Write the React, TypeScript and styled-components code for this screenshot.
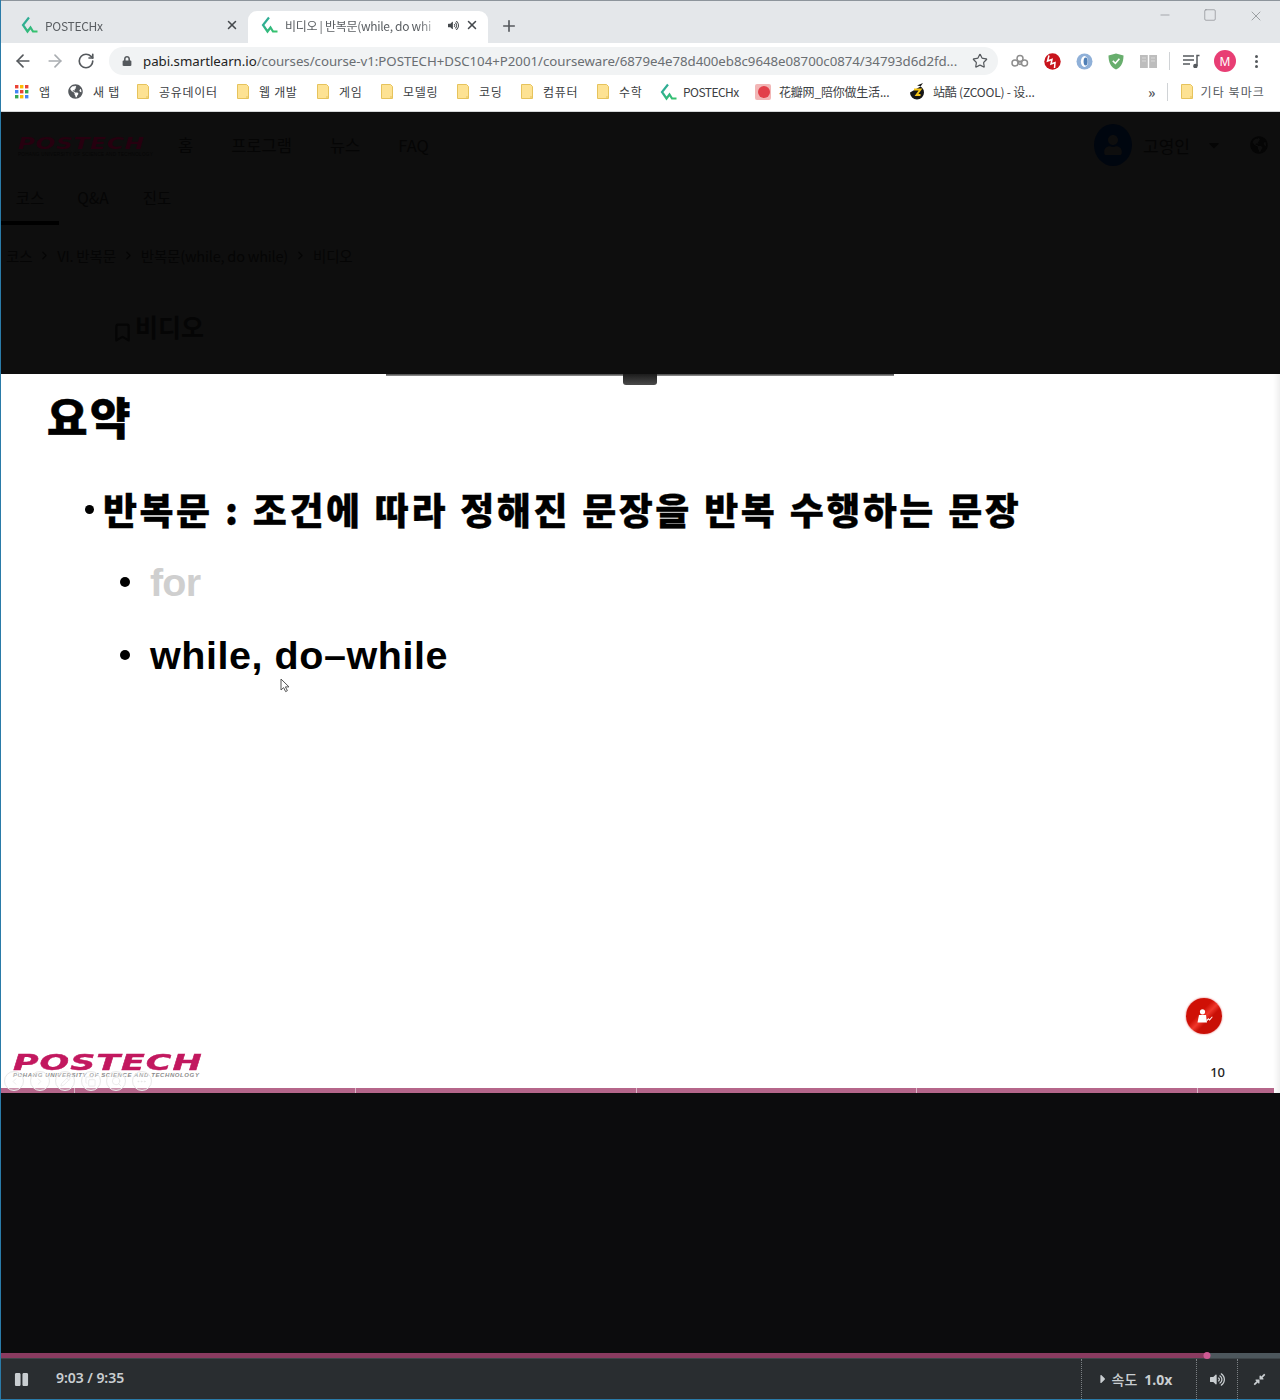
import * as React from "react";
import styled, { createGlobalStyle } from "styled-components";
import { ArrowLeft, ArrowRight, RotateCw, Star, X, Plus, Minus, Square, Bookmark, ChevronRight, ChevronLeft, Pencil, Copy, Search, MoreHorizontal } from "lucide-react";
import { FaLock, FaGlobeAmericas, FaVolumeUp, FaCompressAlt, FaPause, FaCaretRight, FaCaretDown, FaUser } from "react-icons/fa";

const KR = `"Noto Sans CJK KR", "Noto Sans", sans-serif`;

const GlobalStyle = createGlobalStyle`
  html, body { margin: 0; padding: 0; background: #fff; overflow: hidden; }
  * { box-sizing: border-box; }
`;

const Win = styled.div`
  width: 1280px;
  height: 1400px;
  display: flex;
  flex-direction: column;
  border-left: 1px solid #2a7ba8;
  font-family: ${KR};
  overflow: hidden;
`;

const TabStrip = styled.div`
  height: 43px;
  flex: none;
  background: #e4e7ea;
  border-top: 1px solid #8d959c;
  display: flex;
  align-items: flex-end;
  padding-left: 7px;
  color: #45494d;
`;

const Tab = styled.div<{ $active?: boolean }>`
  width: 240px;
  height: 32px;
  display: flex;
  align-items: center;
  padding: 0 9px 4px 13px;
  border-radius: 9px 9px 0 0;
  background: ${(p) => (p.$active ? "#fff" : "transparent")};
  font-size: 12px;
  gap: 6px;
`;

const TabTitle = styled.span`
  flex: 1;
  white-space: nowrap;
  overflow: hidden;
  color: #5a5e62;
  letter-spacing: -0.3px;
  mask-image: linear-gradient(to right, #000 85%, transparent 100%);
`;

const NewTab = styled.div`
  margin-left: 12px;
  height: 32px;
  display: flex;
  align-items: center;
  padding-bottom: 2px;
  color: #55595d;
`;

const WinButtons = styled.div`
  margin-left: auto;
  align-self: flex-start;
  display: flex;
  gap: 31px;
  padding: 7px 16px 0 0;
  color: #777b7f;
`;

const Toolbar = styled.div`
  height: 34px;
  flex: none;
  background: #fff;
  display: flex;
  align-items: center;
  padding: 2px 0 0 12px;
  color: #5f6368;
`;

const NavBtn = styled.div<{ $dim?: boolean }>`
  width: 32px;
  display: flex;
  color: ${(p) => (p.$dim ? "#a9adb1" : "#55595d")};
`;

const Omnibox = styled.div`
  width: 889px;
  height: 28px;
  border-radius: 14px;
  background: #f1f3f4;
  display: flex;
  align-items: center;
  padding: 0 10px 0 13px;
  font-size: 13.28px;
  letter-spacing: -0.03px;
  color: #6a6e72;
  white-space: nowrap;
  font-family: "Noto Sans", sans-serif;
`;

const Host = styled.span`
  color: #222;
`;

const Url = styled.span`
  margin-left: 11px;
  flex: 1;
  overflow: hidden;
`;

const Extensions = styled.div`
  display: flex;
  align-items: center;
  padding-left: 6px;
`;

const Ext = styled.div`
  width: 32px;
  height: 24px;
  display: flex;
  align-items: center;
  justify-content: center;
`;

const VDivider = styled.div`
  width: 1px;
  height: 18px;
  background: #d0d3d6;
  margin: 0 5px 0 5px;
`;

const Avatar = styled.div`
  width: 22px;
  height: 22px;
  border-radius: 50%;
  background: #e83e74;
  color: #fff;
  font-size: 12px;
  display: flex;
  align-items: center;
  justify-content: center;
  font-family: "Noto Sans", sans-serif;
  margin: 0 10px 0 7px;
`;

const Kebab = styled.div`
  display: flex;
  flex-direction: column;
  gap: 2px;
  margin-left: 9px;
  i {
    width: 3px;
    height: 3px;
    border-radius: 50%;
    background: #55595d;
  }
`;

const Bookmarks = styled.div`
  height: 35px;
  flex: none;
  background: #fff;
  border-bottom: 1px solid #d4d6d8;
  display: flex;
  align-items: center;
  padding: 0 15px 5px 14px;
  font-size: 12px;
  color: #3c4043;
`;

const Mark = styled.div<{ $w: number; $gap: number }>`
  width: ${(p) => p.$w}px;
  flex: none;
  display: flex;
  align-items: center;
  gap: ${(p) => p.$gap}px;
  white-space: nowrap;
  overflow: hidden;
`;

const MarkLabel = styled.span<{ $ls: number }>`
  letter-spacing: ${(p) => p.$ls}px;
`;

const MarksRight = styled.div`
  margin-left: auto;
  display: flex;
  align-items: center;
  color: #55595d;
  gap: 8px;
`;

const Chevrons = styled.span`
  font-size: 14px;
  font-weight: 700;
  margin-right: -2px;
`;

const DimPage = styled.div`
  height: 262px;
  flex: none;
  background: #0e0e0e;
  color: #050505;
  display: flex;
  flex-direction: column;
`;

const DimHeader = styled.div`
  height: 66px;
  display: flex;
  align-items: center;
  padding: 0 12px 0 17px;
  font-size: 16.5px;
`;

const DimLogo = styled.div`
  width: 160px;
  display: flex;
  flex-direction: column;
  padding-top: 6px;
`;

const DimLogoWord = styled.div`
  color: #26000f;
  font: italic 700 16.5px/14px "DejaVu Sans", sans-serif;
  white-space: nowrap;
  transform: scaleX(1.4);
  transform-origin: left center;
  letter-spacing: 0.6px;
`;

const DimLogoSub = styled.div`
  font: 500 4.6px/8px "Liberation Sans", sans-serif;
  letter-spacing: 0.3px;
  white-space: nowrap;
  color: #060606;
`;

const DimNav = styled.div`
  display: flex;
  gap: 38px;
`;

const DimUser = styled.div`
  margin-left: auto;
  display: flex;
  align-items: center;
  gap: 11px;
  font-size: 17px;
`;

const DimAvatar = styled.div`
  width: 38px;
  height: 42px;
  border-radius: 50%;
  background: #00060f;
  color: #0e0e0e;
  display: flex;
  align-items: center;
  justify-content: center;
  font-size: 20px;
`;

const DimGlobe = styled.div`
  color: #050505;
  margin-left: 17px;
  display: flex;
`;

const DimCaret = styled.span`
  display: flex;
  margin-left: 5px;
`;

const DimTabs = styled.div`
  display: flex;
  height: 47px;
  font-size: 15.5px;
`;

const DimTab = styled.div<{ $active?: boolean; $w: number }>`
  width: ${(p) => p.$w}px;
  text-align: center;
  padding-top: 8px;
  border-bottom: ${(p) => (p.$active ? "4px solid #000" : "none")};
`;

const Crumbs = styled.div`
  display: flex;
  align-items: center;
  gap: 6px;
  padding: 20px 0 0 5px;
  font-size: 14.5px;
  letter-spacing: -0.2px;
`;

const DimTitle = styled.div`
  display: flex;
  align-items: flex-end;
  gap: 2px;
  padding: 43px 0 0 111px;
  font-size: 25px;
  font-weight: 700;
  line-height: 34px;
`;

const Slide = styled.div`
  position: relative;
  height: 719px;
  flex: none;
  background: #fff;
  color: #000;
  display: flex;
  flex-direction: column;
  padding: 0 6px 0 0;
  box-shadow: inset -6px 0 6px -4px #e9e9e9;
`;

const TopLine = styled.div`
  position: absolute;
  top: 0;
  left: 385px;
  width: 508px;
  height: 2px;
  background: linear-gradient(#444, #999);
`;

const Notch = styled.div`
  position: absolute;
  top: 0;
  left: 622px;
  width: 34px;
  height: 11px;
  border-radius: 0 0 3px 3px;
  background: linear-gradient(#1c1c1c, #4a4a4a);
`;

const Heading = styled.div`
  font: 800 44px/50px ${KR};
  padding: 17px 0 0 46px;
  letter-spacing: 2.5px;
  -webkit-text-stroke: 0.6px #000;
`;

const Lead = styled.div`
  display: flex;
  align-items: center;
  padding: 43px 0 0 84px;
  font: 800 37px/50px ${KR};
  letter-spacing: 2.5px;
  word-spacing: 1.4px;
  white-space: pre;
  -webkit-text-stroke: 0.3px #000;
`;

const LeadDot = styled.i`
  width: 9px;
  height: 9px;
  border-radius: 50%;
  background: #000;
  margin-right: 9px;
`;

const SubItem = styled.div<{ $faded?: boolean }>`
  display: flex;
  align-items: center;
  padding: 0 0 0 119px;
  height: 50px;
  margin-top: 23px;
  font: 700 39.5px/50px "Liberation Sans", Arial, sans-serif;
  letter-spacing: ${(p) => (p.$faded ? "-0.8px" : "0.55px")};
  color: ${(p) => (p.$faded ? "#cfcfcf" : "#000")};
`;

const SubDot = styled.i`
  width: 10px;
  height: 10px;
  border-radius: 50%;
  background: #000;
  margin-right: 20px;
`;

const Cursor = styled.svg`
  position: absolute;
  left: 279px;
  top: 304px;
`;

const RedBadge = styled.div`
  position: absolute;
  left: 1185px;
  top: 624px;
  width: 36px;
  height: 36px;
  border-radius: 50%;
  background: linear-gradient(135deg, #cf1006 40%, #f0372b 52%, #c90f06 62%);
  box-shadow: 0 0 2px #d55;
  display: flex;
  align-items: center;
  justify-content: center;
`;

const SlideFooter = styled.div`
  margin-top: auto;
  display: flex;
  align-items: flex-end;
  justify-content: space-between;
  padding: 0 49px 6px 12px;
`;

const LogoBlock = styled.div`
  display: flex;
  flex-direction: column;
  padding-bottom: 3px;
`;

const LogoWord = styled.div`
  font: italic 700 21px/16px "DejaVu Sans", sans-serif;
  color: #c2185f;
  white-space: nowrap;
  width: 112px;
  transform: scaleX(1.66);
  transform-origin: left center;
  letter-spacing: 0.6px;
  -webkit-text-stroke: 0.4px #c2185f;
`;

const LogoSub = styled.div`
  font: italic 700 6px/8px "Liberation Sans", sans-serif;
  color: #8b8b8b;
  letter-spacing: 0.6px;
  white-space: nowrap;
`;

const PageNo = styled.div`
  font: 500 13px/16px "Noto Sans", sans-serif;
  color: #222;
  padding-bottom: 2px;
`;

const GhostTools = styled.div`
  position: absolute;
  left: 3px;
  top: 697px;
  display: flex;
  gap: 5.5px;
`;

const GhostBtn = styled.div`
  width: 20px;
  height: 20px;
  border-radius: 50%;
  border: 1px solid #e8e8e8;
  background: rgba(255, 255, 255, 0.3);
  color: #e4e4e4;
  display: flex;
  align-items: center;
  justify-content: center;
`;

const SlideBar = styled.div`
  height: 5px;
  flex: none;
  width: 1273px;
  background: #b5668a;
  display: flex;
  i {
    height: 5px;
    border-right: 1px solid #d9b7c7;
    flex: none;
  }
`;

const DarkGap = styled.div`
  height: 260px;
  flex: none;
  background: #0c0c0d;
`;

const Progress = styled.div`
  position: relative;
  height: 6px;
  flex: none;
  background: #4d575c;
  border-bottom: 1px solid #3e4548;
`;

const ProgressFill = styled.div`
  height: 5px;
  background: #8a3b60;
`;

const Handle = styled.div`
  position: absolute;
  top: -1px;
  width: 7px;
  height: 7px;
  border-radius: 50%;
  background: #cf5a93;
  transform: translateX(-3.5px);
`;

const Controls = styled.div`
  flex: 1;
  background: #292d30;
  color: #c9ced1;
  display: flex;
  align-items: stretch;
  font: 600 14px "Noto Sans", sans-serif;
  border-bottom: 1px solid #2a7ba8;
`;

const PauseBtn = styled.div`
  width: 55px;
  display: flex;
  align-items: center;
  padding-left: 13px;
  font-size: 15px;
`;

const Clock = styled.div`
  display: flex;
  align-items: center;
  flex: 1;
  letter-spacing: -0.05px;
  padding-bottom: 3px;
`;

const CtlBox = styled.div<{ $w: number; $pr?: number }>`
  width: ${(p) => p.$w}px;
  border-left: 1px dotted #7b8084;
  display: flex;
  align-items: center;
  justify-content: center;
  gap: 5px;
  padding-right: ${(p) => p.$pr ?? 0}px;
`;

const SpeedCaret = styled.span`
  display: flex;
  margin-right: -3px;
`;

const SpeedLabel = styled.span`
  font-family: ${KR};
  font-weight: 500;
  font-size: 14px;
`;

const SpeedVal = styled.span`
  font-weight: 700;
  margin-left: 2px;
`;

const Zig: React.FC = () => (
  <svg width="18" height="18" viewBox="0 0 18 18" fill="none">
    <defs>
      <linearGradient id="zg" x1="0" y1="0" x2="1" y2="1">
        <stop offset="0" stopColor="#2ea7a0" />
        <stop offset="1" stopColor="#36c46a" />
      </linearGradient>
    </defs>
    <path d="M8 1.5 L2 9 L6.5 15.5 L9.5 11.5 L12 15.5 L16.5 15.5" stroke="url(#zg)" strokeWidth="2.2" strokeLinejoin="miter" />
  </svg>
);

const Folder: React.FC = () => (
  <svg width="12" height="15" viewBox="0 0 12 15">
    <path d="M.5.5h9l2 2v12H.5z" fill="#fde293" stroke="#e6c35c" />
    <path d="M9 13h2.5" stroke="#e6c35c" />
  </svg>
);

const AppsGrid: React.FC = () => {
  const colors = ["#ea4335", "#fbbc05", "#ea4335", "#4285f4", "#ea4335", "#34a853", "#34a853", "#fbbc05", "#4285f4"];
  return (
    <svg width="14" height="14" viewBox="0 0 14 14">
      {colors.map((c, i) => (
        <rect key={i} x={(i % 3) * 5} y={Math.floor(i / 3) * 5} width="3.4" height="3.4" fill={c} />
      ))}
    </svg>
  );
};

const RedPetal: React.FC = () => (
  <svg width="16" height="16" viewBox="0 0 16 16">
    <rect width="16" height="16" rx="2" fill="#f2b6b6" />
    <circle cx="9" cy="8" r="6" fill="#e2404a" />
  </svg>
);

const Zcool: React.FC = () => (
  <svg width="17" height="17" viewBox="0 0 17 17">
    <path d="M1 9.5a7 7 0 1 0 7-7l6-2.5-2.5 3.5z" fill="#161616" />
    <path d="M5 6.5h6.5l-4 5.5h4" stroke="#f5c518" strokeWidth="1.9" fill="none" />
  </svg>
);

const CloudExt: React.FC = () => (
  <svg width="18" height="14" viewBox="0 0 18 14" fill="none" stroke="#8e8e8e" strokeWidth="1.5">
    <circle cx="4" cy="9" r="3" />
    <circle cx="9" cy="4.5" r="3" />
    <circle cx="13.5" cy="9" r="3" />
    <circle cx="9" cy="9" r="1.4" />
  </svg>
);

const RedExt: React.FC = () => (
  <svg width="17" height="17" viewBox="0 0 17 17">
    <circle cx="8.5" cy="8.5" r="8.2" fill="#c8141c" />
    <path d="M5 2.5 L3.5 8 L8 6.5 L7 11 L11 9.5 L10.5 15" stroke="#fff" strokeWidth="1.5" fill="none" />
  </svg>
);

const BlueExt: React.FC = () => (
  <svg width="17" height="17" viewBox="0 0 17 17">
    <circle cx="8.5" cy="8.5" r="8" fill="#8fb0d8" />
    <ellipse cx="8.5" cy="8.5" rx="3.6" ry="5.4" fill="#fff" />
    <ellipse cx="9.6" cy="8.5" rx="2" ry="4" fill="#4f7fb6" />
  </svg>
);

const ShieldExt: React.FC = () => (
  <svg width="16" height="17" viewBox="0 0 16 17">
    <path d="M8 .5 15.5 2.5C15.5 9 13.5 14 8 16.5 2.5 14 .5 9 .5 2.5z" fill="#68ae6d" />
    <path d="M4.8 7.8 7.4 10.3 11.4 5.8" stroke="#fff" strokeWidth="1.6" fill="none" />
  </svg>
);

const BookExt: React.FC = () => (
  <svg width="17" height="14" viewBox="0 0 17 14">
    <path d="M0 1h7.8v13H0zM9.2 1H17v13H9.2z" fill="#bdbdbd" />
    <path d="M2 4h4M2 7h4M11 4h4M11 7h4" stroke="#d8d8d8" />
  </svg>
);

const QueueExt: React.FC = () => (
  <svg width="17" height="14" viewBox="0 0 17 14" fill="none" stroke="#55595d" strokeWidth="1.5">
    <path d="M0 2h11M0 6h11M0 10h7" />
    <path d="M14 12V1.5h2.5" />
    <circle cx="12.4" cy="12" r="1.5" fill="#55595d" />
  </svg>
);

const TutorIcon: React.FC = () => (
  <svg width="18" height="14" viewBox="0 0 18 14" fill="#fff">
    <circle cx="7.5" cy="2.8" r="2.6" />
    <path d="M4 6h7l1 7.5H2.5z" />
    <path d="M11.5 11 13.5 9l1 1.2L17 7.5l.7.6-3.1 3.7-1.1-1.2-1.5 1.6z" />
  </svg>
);

const Cur: React.FC = () => (
  <Cursor width="11" height="15" viewBox="0 0 11 15">
    <path d="M1 1v11l2.6-2.4 2 4 1.8-.9-2-3.8H9z" fill="#fff" stroke="#555" strokeWidth="1" />
  </Cursor>
);

const marks: { w: number; gap: number; ls: number; label: string; icon: React.ReactNode }[] = [
  { w: 53, gap: 10, ls: 0.2, label: "앱", icon: <AppsGrid /> },
  { w: 69, gap: 10, ls: 0.7, label: "새 탭", icon: <FaGlobeAmericas size={15} color="#55595d" /> },
  { w: 100, gap: 10, ls: 0.7, label: "공유데이터", icon: <Folder /> },
  { w: 80, gap: 10, ls: 0.7, label: "웹 개발", icon: <Folder /> },
  { w: 64, gap: 10, ls: 0.7, label: "게임", icon: <Folder /> },
  { w: 76, gap: 10, ls: 0.7, label: "모델링", icon: <Folder /> },
  { w: 64, gap: 10, ls: 0.7, label: "코딩", icon: <Folder /> },
  { w: 76, gap: 10, ls: 0.7, label: "컴퓨터", icon: <Folder /> },
  { w: 63, gap: 10, ls: 0.7, label: "수학", icon: <Folder /> },
  { w: 95, gap: 5, ls: -0.55, label: "POSTECHx", icon: <Zig /> },
  { w: 154, gap: 8, ls: -0.2, label: "花瓣网_陪你做生活...", icon: <RedPetal /> },
  { w: 180, gap: 7, ls: -0.2, label: "站酷 (ZCOOL) - 设...", icon: <Zcool /> },
];

const segs = [74, 281, 281, 280, 281];

const ghostIcons = [ChevronLeft, ChevronRight, Pencil, Copy, Search, MoreHorizontal];

const App: React.FC = () => (
  <Win>
    <GlobalStyle />
    <TabStrip>
      <Tab>
        <Zig />
        <TabTitle>POSTECHx</TabTitle>
        <X size={14} strokeWidth={2.6} />
      </Tab>
      <Tab $active>
        <Zig />
        <TabTitle>비디오 | 반복문(while, do whi</TabTitle>
        <FaVolumeUp size={11} />
        <X size={14} strokeWidth={2.6} />
      </Tab>
      <NewTab>
        <Plus size={18} strokeWidth={2.2} />
      </NewTab>
      <WinButtons>
        <Minus size={14} strokeWidth={1} />
        <Square size={14} strokeWidth={1} />
        <X size={16} strokeWidth={1} />
      </WinButtons>
    </TabStrip>
    <Toolbar>
      <NavBtn>
        <ArrowLeft size={20} strokeWidth={2} />
      </NavBtn>
      <NavBtn $dim>
        <ArrowRight size={20} strokeWidth={2} />
      </NavBtn>
      <NavBtn>
        <RotateCw size={18} strokeWidth={2.2} />
      </NavBtn>
      <Omnibox>
        <FaLock size={10} color="#55595d" />
        <Url>
          <Host>pabi.smartlearn.io</Host>
          /courses/course-v1:POSTECH+DSC104+P2001/courseware/6879e4e78d400eb8c9648e08700c0874/34793d6d2fd...
        </Url>
        <Star size={16} strokeWidth={1.8} color="#55595d" />
      </Omnibox>
      <Extensions>
        <Ext>
          <CloudExt />
        </Ext>
        <Ext>
          <RedExt />
        </Ext>
        <Ext>
          <BlueExt />
        </Ext>
        <Ext>
          <ShieldExt />
        </Ext>
        <Ext>
          <BookExt />
        </Ext>
        <VDivider />
        <Ext>
          <QueueExt />
        </Ext>
        <Avatar>M</Avatar>
        <Kebab>
          <i />
          <i />
          <i />
        </Kebab>
      </Extensions>
    </Toolbar>
    <Bookmarks>
      {marks.map((m) => (
        <Mark key={m.label} $w={m.w} $gap={m.gap}>
          {m.icon}
          <MarkLabel $ls={m.ls}>{m.label}</MarkLabel>
        </Mark>
      ))}
      <MarksRight>
        <Chevrons>»</Chevrons>
        <VDivider />
        <Folder />
        <MarkLabel $ls={1.1}>기타 북마크</MarkLabel>
      </MarksRight>
    </Bookmarks>
    <DimPage>
      <DimHeader>
        <DimLogo>
          <DimLogoWord>POSTECH</DimLogoWord>
          <DimLogoSub>POHANG UNIVERSITY OF SCIENCE AND TECHNOLOGY</DimLogoSub>
        </DimLogo>
        <DimNav>
          <span>홈</span>
          <span>프로그램</span>
          <span>뉴스</span>
          <span>FAQ</span>
        </DimNav>
        <DimUser>
          <DimAvatar>
            <FaUser />
          </DimAvatar>
          <span>고영인</span>
          <DimCaret>
            <FaCaretDown size={16} />
          </DimCaret>
          <DimGlobe>
            <FaGlobeAmericas size={18} />
          </DimGlobe>
        </DimUser>
      </DimHeader>
      <DimTabs>
        <DimTab $active $w={58}>코스</DimTab>
        <DimTab $w={68}>Q&amp;A</DimTab>
        <DimTab $w={60}>진도</DimTab>
      </DimTabs>
      <Crumbs>
        <span>코스</span>
        <ChevronRight size={13} />
        <span>VI. 반복문</span>
        <ChevronRight size={13} />
        <span>반복문(while, do while)</span>
        <ChevronRight size={13} />
        <span>비디오</span>
      </Crumbs>
      <DimTitle>
        <Bookmark size={21} strokeWidth={2.5} />
        <span>비디오</span>
      </DimTitle>
    </DimPage>
    <Slide>
      <TopLine />
      <Notch />
      <Heading>요약</Heading>
      <Lead>
        <LeadDot />
        반복문 : 조건에 따라 정해진 문장을 반복 수행하는 문장
      </Lead>
      <SubItem $faded>
        <SubDot />
        for
      </SubItem>
      <SubItem>
        <SubDot />
        while, do–while
      </SubItem>
      <Cur />
      <RedBadge>
        <TutorIcon />
      </RedBadge>
      <SlideFooter>
        <LogoBlock>
          <LogoWord>POSTECH</LogoWord>
          <LogoSub>POHANG UNIVERSITY OF SCIENCE AND TECHNOLOGY</LogoSub>
        </LogoBlock>
        <PageNo>10</PageNo>
      </SlideFooter>
      <GhostTools>
        {ghostIcons.map((Icon, i) => (
          <GhostBtn key={i}>
            <Icon size={11} strokeWidth={1.5} />
          </GhostBtn>
        ))}
      </GhostTools>
      <SlideBar>
        {segs.map((w, i) => (
          <i key={i} style={{ width: w }} />
        ))}
      </SlideBar>
    </Slide>
    <DarkGap />
    <Progress>
      <ProgressFill style={{ width: `${(543 / 575) * 100}%` }} />
      <Handle style={{ left: 1206 }} />
    </Progress>
    <Controls>
      <PauseBtn>
        <FaPause />
      </PauseBtn>
      <Clock>9:03 / 9:35</Clock>
      <CtlBox $w={115} $pr={10}>
        <SpeedCaret>
          <FaCaretRight size={14} />
        </SpeedCaret>
        <SpeedLabel>속도</SpeedLabel>
        <SpeedVal>1.0x</SpeedVal>
      </CtlBox>
      <CtlBox $w={41}>
        <FaVolumeUp size={15} />
      </CtlBox>
      <CtlBox $w={43}>
        <FaCompressAlt size={13} />
      </CtlBox>
    </Controls>
  </Win>
);

export default App;
